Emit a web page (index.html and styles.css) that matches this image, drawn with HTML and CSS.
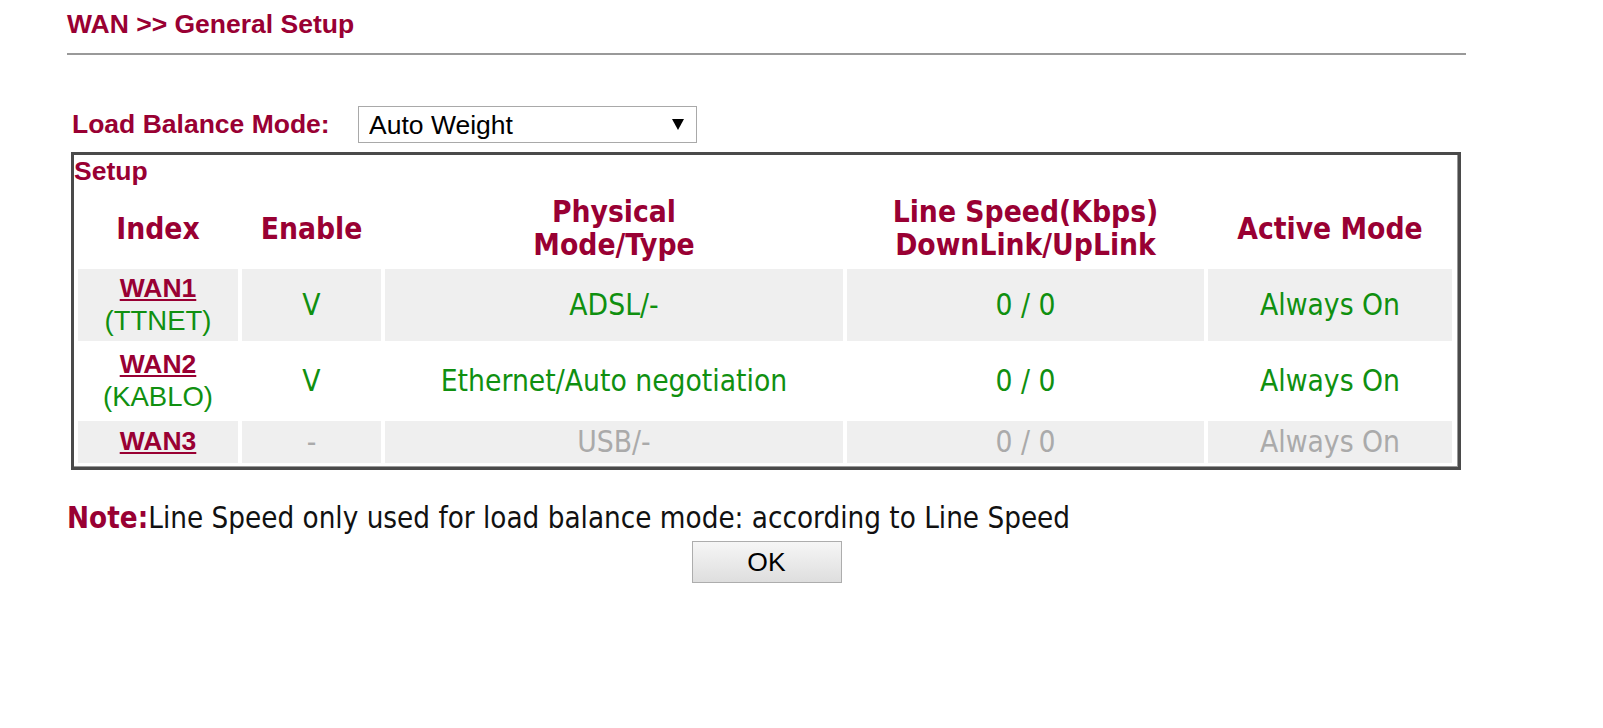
FILE: index.html
```html
<!DOCTYPE html>
<html lang="en">
<head>
    <meta charset="UTF-8">
    <title>WAN &gt;&gt; General Setup</title>
    <link rel="stylesheet" href="styles.css">
</head>
<body>
    <div class="page">
        <h1 class="title">WAN &gt;&gt; General Setup</h1>
        <div class="rule"></div>

        <div class="lb-row">
            <label for="lbmode" class="lb-label">Load Balance Mode:</label>
            <div class="select-wrap">
                <select id="lbmode" name="lbmode">
                    <option value="auto">Auto Weight</option>
                    <option value="speed">According to Line Speed</option>
                </select>
                <svg class="select-arrow" width="12" height="12" viewBox="0 0 12 12"><polygon points="0,1 12,1 6,12" fill="#000"/></svg>
            </div>
        </div>

        <div class="setup-box">
            <div class="setup-title">Setup</div>
            <table class="wan-table">
                <colgroup>
                    <col style="width:160px">
                    <col style="width:139px">
                    <col style="width:458px">
                    <col style="width:357px">
                    <col style="width:244px">
                </colgroup>
                <tr>
                    <th>Index</th>
                    <th>Enable</th>
                    <th>Physical<br>Mode/Type</th>
                    <th>Line Speed(Kbps)<br>DownLink/UpLink</th>
                    <th>Active Mode</th>
                </tr>
                <tr class="shade">
                    <td class="idx"><a href="#" class="wan-link">WAN1</a><div class="isp">(TTNET)</div></td>
                    <td>V</td>
                    <td>ADSL/-</td>
                    <td>0 / 0</td>
                    <td>Always On</td>
                </tr>
                <tr>
                    <td class="idx"><a href="#" class="wan-link">WAN2</a><div class="isp">(KABLO)</div></td>
                    <td>V</td>
                    <td>Ethernet/Auto negotiation</td>
                    <td>0 / 0</td>
                    <td>Always On</td>
                </tr>
                <tr class="shade off">
                    <td class="idx"><a href="#" class="wan-link">WAN3</a></td>
                    <td>-</td>
                    <td>USB/-</td>
                    <td>0 / 0</td>
                    <td>Always On</td>
                </tr>
            </table>
        </div>

        <p class="note"><b>Note:</b>Line Speed only used for load balance mode: according to Line Speed</p>

        <div class="actions">
            <button type="button" class="ok-button">OK</button>
        </div>
    </div>
</body>
</html>
```

FILE: styles.css
```css
body {
    margin: 0;
    background-color: white;
    font-family: "DejaVu Sans Condensed", "DejaVu Sans", sans-serif;
}
.page {
    width: 1399px;
    margin-left: 67px;
}
.title {
    margin: 0;
    padding-top: 9px;
    font-family: "Liberation Sans", Arial, sans-serif;
    font-size: 26.5px;
    line-height: 30px;
    font-weight: bold;
    color: #990033;
}
.rule {
    margin-top: 14px;
    border-top: 2px solid #999;
}
.lb-row {
    display: flex;
    align-items: center;
    margin-top: 51px;
    padding-left: 5px;
}
.lb-label {
    width: 286px;
    font-family: "Liberation Sans", Arial, sans-serif;
    font-size: 26.5px;
    font-weight: bold;
    color: #990033;
}
.select-wrap {
    position: relative;
    width: 339px;
    height: 37px;
}
.select-wrap select {
    appearance: none;
    -webkit-appearance: none;
    width: 100%;
    height: 100%;
    margin: 0;
    padding: 0 0 0 10px;
    border: 1px solid #a9a9a9;
    border-radius: 0;
    background-color: white;
    font-family: "Liberation Sans", Arial, sans-serif;
    font-size: 26.5px;
    color: #000;
}
.select-arrow {
    position: absolute;
    top: 12px;
    right: 13px;
    pointer-events: none;
}
.setup-box {
    margin: 9px 0 0 4px;
    width: 1384px;
    border: 3px solid #4a4a4a;
    box-shadow: inset -1px -1px 0 #999;
}
.setup-title {
    font-family: "Liberation Sans", Arial, sans-serif;
    font-size: 26.5px;
    line-height: 33px;
    font-weight: bold;
    color: #990033;
}
.wan-table {
    border-spacing: 4px;
    table-layout: fixed;
    margin-top: -4px;
}
.wan-table th {
    padding: 7px 4px 4px;
    font-size: 29.7px;
    line-height: 33px;
    font-weight: bold;
    color: #990033;
    text-align: center;
}
.wan-table td {
    padding: 3px 4px 4px;
    font-size: 29.7px;
    line-height: 35px;
    color: #109010;
    text-align: center;
}
.wan-table td.idx {
    font-family: "Liberation Sans", Arial, sans-serif;
    font-size: 26.5px;
    line-height: 33px;
}
.wan-table tr.shade td {
    background-color: #efefef;
}
.wan-table tr.off td {
    color: #aaa;
}
.wan-link {
    font-weight: bold;
    color: #990033;
}
.isp {
    font-size: 27.5px;
    line-height: 32px;
}
.note {
    margin: 31px 0 0;
    font-size: 29.3px;
    line-height: 34px;
    color: #111;
}
.note b {
    color: #990033;
}
.actions {
    margin-top: 6px;
    text-align: center;
}
.ok-button {
    width: 150px;
    height: 42px;
    border: 1px solid #adadad;
    border-radius: 0;
    background: linear-gradient(#f6f6f6, #dedede);
    font-family: "Liberation Sans", Arial, sans-serif;
    font-size: 26.5px;
    color: #000;
    cursor: pointer;
}
```
